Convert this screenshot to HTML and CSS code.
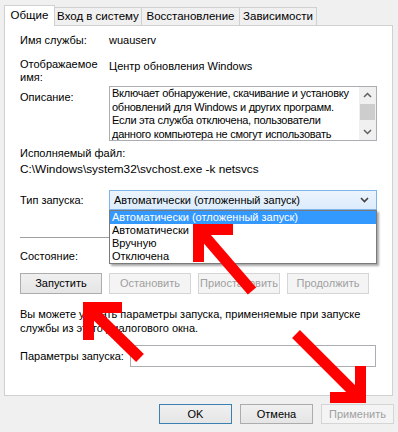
FILE: index.html
```html
<!DOCTYPE html>
<html lang="ru">
<head>
  <meta charset="UTF-8">
  <meta name="viewport" content="width=device-width, initial-scale=1.0">
  <title>Свойства службы</title>
  <link rel="stylesheet" href="styles.css">
</head>
<body>
  <main class="dialog">
    <nav class="tabs">
      <div class="tab tab-general active">Общие</div>
      <div class="tab tab-logon">Вход в систему</div>
      <div class="tab tab-recovery">Восстановление</div>
      <div class="tab tab-deps">Зависимости</div>
    </nav>

    <section class="panel">
      <div class="row name-row">
        <span class="label">Имя службы:</span>
        <span class="value">wuauserv</span>
      </div>

      <div class="row display-row">
        <span class="label">Отображаемое<br>имя:</span>
        <span class="value">Центр обновления Windows</span>
      </div>

      <div class="row desc-row">
        <span class="label">Описание:</span>
        <div class="desc">
          <div class="desc-text">Включает обнаружение, скачивание и установку обновлений для Windows и других программ. Если эта служба отключена, пользователи данного компьютера не смогут использовать</div>
          <div class="scrollbar">
            <svg class="scroll-arrow" width="17" height="17" viewBox="0 0 17 17"><path d="M5 10 L8.5 6.5 L12 10" fill="none" stroke="#606060" stroke-width="1.5"/></svg>
            <div class="scroll-thumb"></div>
            <div class="scroll-track"></div>
            <svg class="scroll-arrow" width="17" height="17" viewBox="0 0 17 17"><path d="M5 7 L8.5 10.5 L12 7" fill="none" stroke="#606060" stroke-width="1.5"/></svg>
          </div>
        </div>
      </div>

      <div class="exe-label">Исполняемый файл:</div>
      <div class="exe-path">C:\Windows\system32\svchost.exe -k netsvcs</div>

      <div class="row type-row">
        <span class="label">Тип запуска:</span>
        <div class="combo-wrap">
          <div class="combo">
            <span>Автоматически (отложенный запуск)</span>
            <svg width="9" height="6" viewBox="0 0 9 6"><path d="M1 1 L4.5 4.5 L8 1" fill="none" stroke="#404040" stroke-width="1.6"/></svg>
          </div>
          <ul class="dropdown">
            <li class="selected">Автоматически (отложенный запуск)</li>
            <li>Автоматически</li>
            <li>Вручную</li>
            <li>Отключена</li>
          </ul>
        </div>
      </div>

      <hr class="sep">

      <div class="row state-row">
        <span class="label">Состояние:</span>
      </div>

      <div class="svc-buttons">
        <button class="btn">Запустить</button>
        <button class="btn" disabled>Остановить</button>
        <button class="btn" disabled>Приостановить</button>
        <button class="btn" disabled>Продолжить</button>
      </div>

      <p class="hint">Вы можете указать параметры запуска, применяемые при запуске службы из этого диалогового окна.</p>

      <div class="row params-row">
        <span class="params-label">Параметры запуска:</span>
        <div class="params-input"></div>
      </div>
    </section>

    <footer class="footer">
      <button class="btn btn-wide default">OK</button>
      <button class="btn btn-wide">Отмена</button>
      <button class="btn btn-wide" disabled>Применить</button>
    </footer>

    <!-- red marker arrows drawn over the dialog -->
    <svg class="arrows" width="398" height="432" viewBox="0 0 398 432">
      <g fill="none" stroke="#ff0000" stroke-width="11" stroke-linejoin="miter">
        <line x1="202" y1="233" x2="252" y2="291"/>
        <polyline points="233,229.5 198.5,229.5 198.5,262"/>
        <line x1="92" y1="311" x2="140" y2="358"/>
        <polyline points="122,307.5 88.5,307.5 88.5,340"/>
        <line x1="296" y1="334" x2="356" y2="394"/>
        <polyline points="330,397.5 360.5,397.5 360.5,366"/>
      </g>
    </svg>
  </main>
</body>
</html>
```

FILE: styles.css
```css
* {
  box-sizing: border-box;
  margin: 0;
  padding: 0;
}

body {
  background-color: #f0f0f0;
  color: #000;
  font-family: "Liberation Sans", Arial, sans-serif;
  font-size: 11px;
  line-height: 15px;
}

.dialog {
  position: relative;
  width: 398px;
  height: 432px;
  padding: 5px 0 0 4px;
}

/* tabs */

.tabs {
  display: flex;
  align-items: flex-end;
  height: 21px;
  margin-bottom: -1px;
}

.tab {
  height: 18px;
  margin-bottom: 1px;
  border: 1px solid #d0d0d0;
  border-bottom: none;
  border-left: none;
  background-color: #f0f0f0;
  text-align: center;
  font-size: 11.5px;
  line-height: 17px;
  white-space: nowrap;
}

.tab.active {
  position: relative;
  z-index: 1;
  height: 21px;
  margin-bottom: 0;
  border-left: 1px solid #d0d0d0;
  background-color: #fff;
  line-height: 18px;
}

.tab-general { width: 51px; }
.tab-logon { width: 87px; }
.tab-recovery { width: 98px; }
.tab-deps { width: 77px; }

/* panel */

.panel {
  width: 389px;
  height: 371px;
  padding: 7px 0 0 15px;
  background-color: #fff;
  border: 1px solid #d0d0d0;
}

.row {
  display: flex;
}

.label {
  flex: 0 0 89px;
  white-space: nowrap;
}

.display-row {
  margin-top: 10px;
  line-height: 13px;
}

.display-row .value {
  line-height: 16px;
}

.desc-row {
  margin-top: 2px;
}

.desc-row .label {
  padding-top: 4px;
}

.desc {
  display: flex;
  width: 268px;
  height: 55px;
  border: 1px solid #abadb3;
  overflow: hidden;
}

.desc-text {
  flex: 1;
  padding: 0 0 0 2px;
  letter-spacing: -0.25px;
  line-height: 13.5px;
}

.scrollbar {
  display: flex;
  flex-direction: column;
  flex: 0 0 17px;
  background-color: #f0f0f0;
}

.scroll-thumb {
  height: 16px;
  margin: 0 1px;
  background-color: #cdcdcd;
}

.scroll-track {
  flex: 1;
}

.exe-label {
  margin-top: 5px;
}

.exe-path {
  margin-top: 1px;
  font-size: 11.8px;
}

.type-row {
  margin-top: 13px;
  line-height: 20px;
}

.combo-wrap {
  position: relative;
}

.combo {
  display: flex;
  align-items: center;
  justify-content: space-between;
  width: 268px;
  height: 20px;
  padding: 0 7px 0 4px;
  border: 1px solid #7eb4ea;
  background: linear-gradient(#ecf4fc, #dcecfc);
}

.dropdown {
  position: absolute;
  top: 20px;
  left: 0;
  z-index: 2;
  width: 268px;
  list-style: none;
  border: 1px solid #7a7a7a;
  background-color: #fff;
  box-shadow: 2px 2px 2px rgba(0, 0, 0, 0.35);
}

.dropdown li {
  height: 13px;
  padding-left: 2px;
  line-height: 13px;
}

.dropdown .selected {
  background-color: #3399ff;
  color: #fff;
}

.sep {
  width: 357px;
  margin-top: 27px;
  border: none;
  border-top: 1px solid #a0a0a0;
}

.state-row {
  margin-top: 11px;
}

.svc-buttons {
  display: flex;
  gap: 7px;
  margin-top: 9px;
}

.btn {
  width: 82px;
  height: 21px;
  font: inherit;
  color: #000;
  border: 1px solid #acacac;
  background: linear-gradient(#f0f0f0, #e5e5e5);
}

.btn:disabled {
  color: #a0a0a0;
  border-color: #d5d5d5;
  background: #f4f4f4;
}

.hint {
  width: 360px;
  margin-top: 13px;
  line-height: 14px;
}

.params-row {
  align-items: center;
  margin-top: 10px;
}

.params-label {
  flex: 0 0 110px;
  white-space: nowrap;
}

.params-input {
  width: 246px;
  height: 22px;
  border: 1px solid #abadb3;
}

/* bottom buttons */

.footer {
  display: flex;
  justify-content: flex-end;
  gap: 8px;
  margin-top: 8px;
  padding-right: 4px;
}

.btn-wide {
  width: 73px;
  height: 20px;
}

.btn.default {
  border-color: #3c7fb1;
}

.arrows {
  position: absolute;
  top: 0;
  left: 0;
  z-index: 5;
  pointer-events: none;
}
```
